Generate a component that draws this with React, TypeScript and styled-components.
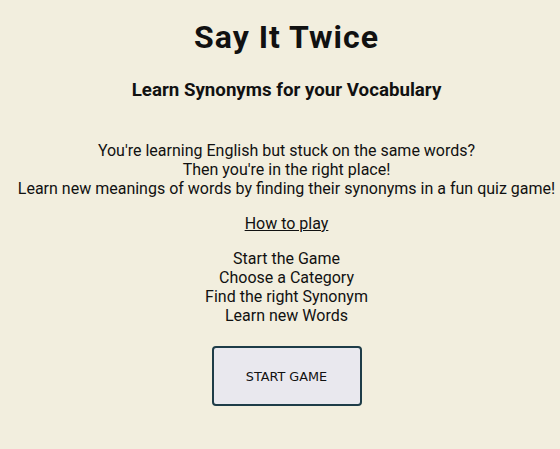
import * as React from 'react'
import styled, { createGlobalStyle } from 'styled-components'

const GlobalStyle = createGlobalStyle`
  html, body {
    margin: 0;
    padding: 0;
    background: #f2eede;
  }

  body {
    font-family: Roboto, "Liberation Sans", sans-serif;
    color: #111;
  }
`

const Page = styled.main`
  display: flex;
  flex-direction: column;
  align-items: center;
  text-align: center;
  padding: 0 0 0 13px;
  min-height: 449px;
  box-sizing: border-box;
`

const Title = styled.h1`
  margin: 18px 0 0;
  font-size: 32px;
  font-weight: 700;
  letter-spacing: 1px;
  line-height: 38px;
`

const Subtitle = styled.h2`
  margin: 23px 0 0;
  font-size: 18.72px;
  font-weight: 700;
  line-height: 22px;
`

const Intro = styled.p`
  margin: 40px 0 0;
  font-size: 16px;
  line-height: 19px;
`

const HowTo = styled.a`
  margin-top: 16px;
  font-size: 16px;
  line-height: 19px;
  color: inherit;
  text-decoration: underline;
`

const Steps = styled.ul`
  list-style: none;
  margin: 16px 0 0;
  padding: 0;
  font-size: 16px;
  line-height: 19px;
`

const StartButton = styled.button`
  margin-top: 21px;
  width: 150px;
  height: 60px;
  background: #e9e8ee;
  border: 2px solid #1e3c48;
  border-radius: 4px;
  font-family: "DejaVu Sans", sans-serif;
  font-size: 12.8px;
  color: #111;
  cursor: pointer;
`

const steps = ['Start the Game', 'Choose a Category', 'Find the right Synonym', 'Learn new Words']

const App: React.FC = () => {
  return (
    <>
      <GlobalStyle />
      <Page>
        <Title>Say It Twice</Title>
        <Subtitle>Learn Synonyms for your Vocabulary</Subtitle>

        <Intro>
          You're learning English but stuck on the same words?
          <br />
          Then you're in the right place!
          <br />
          Learn new meanings of words by finding their synonyms in a fun quiz game!
        </Intro>

        <HowTo href="#how-to-play">How to play</HowTo>

        <Steps>
          {steps.map((step) => (
            <li key={step}>{step}</li>
          ))}
        </Steps>

        <StartButton type="button">START GAME</StartButton>
      </Page>
    </>
  )
}

export default App
